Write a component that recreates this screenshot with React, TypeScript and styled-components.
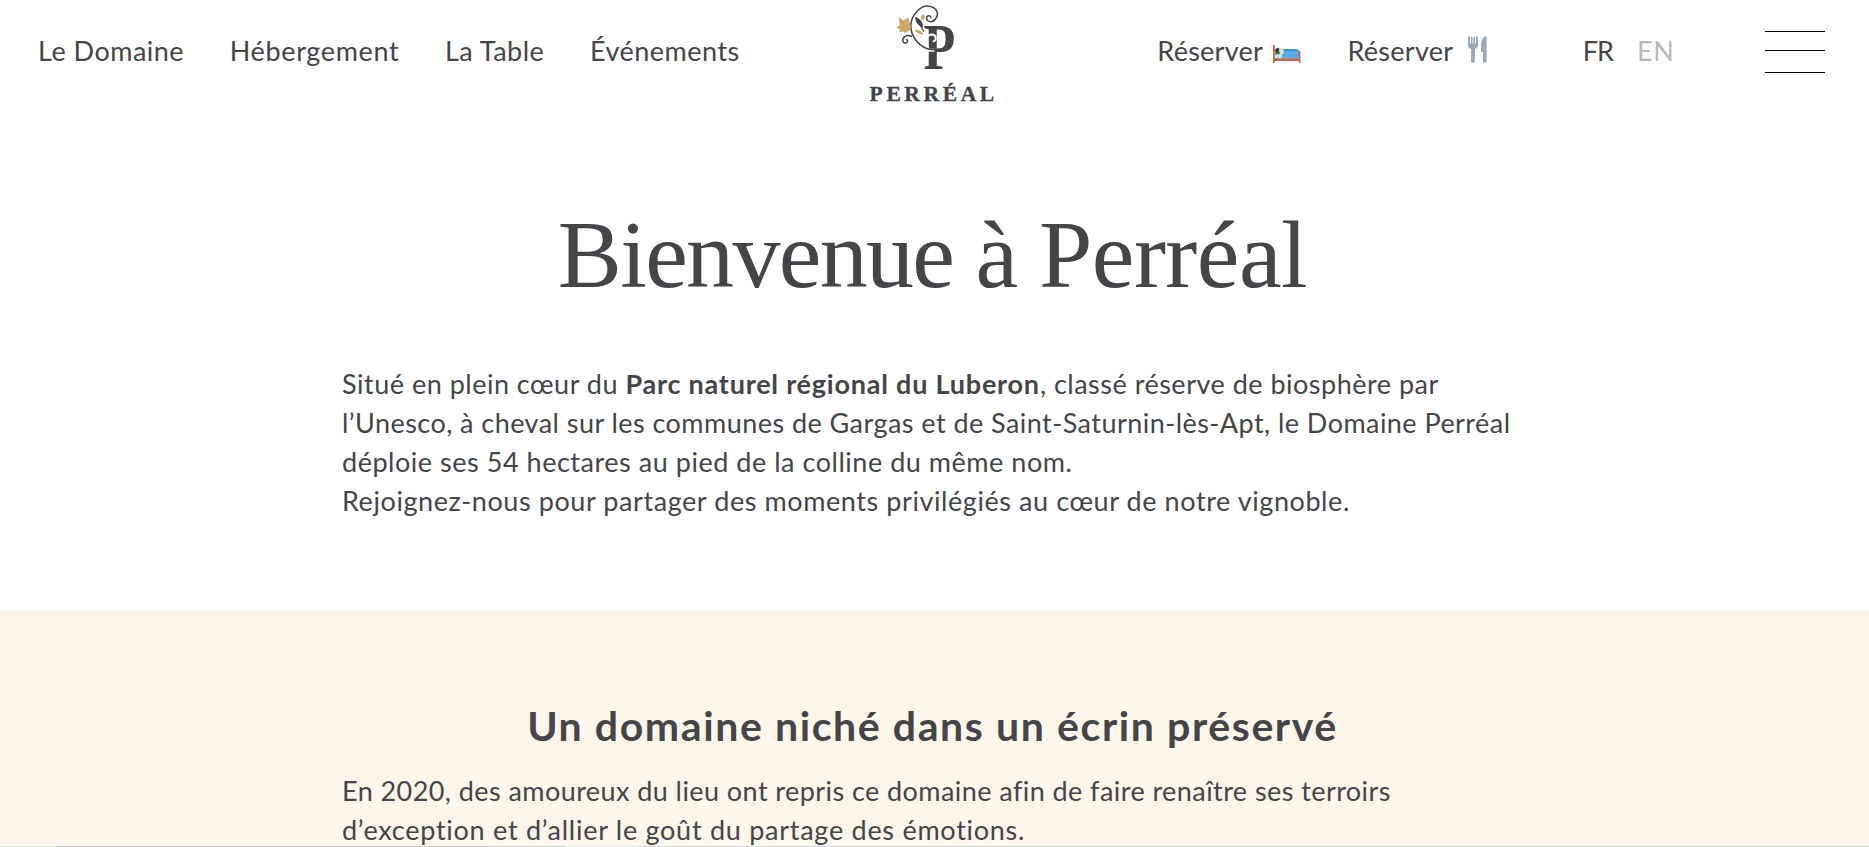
import React from "react";
import styled, { createGlobalStyle } from "styled-components";

const ink = "#444549";
const gold = "#cda766";

const GlobalStyle = createGlobalStyle`
  *, *::before, *::after { box-sizing: border-box; }
  html, body { margin: 0; background: #fff; overflow: hidden; }
`;

const Page = styled.div`
  position: relative;
  display: flex;
  flex-direction: column;
  height: 100vh;
  overflow: hidden;
  background: #fff;
  color: ${ink};
  font-family: Lato, "Open Sans", sans-serif;
  font-size: 27px;
  line-height: 39px;
`;

const Header = styled.header`
  display: grid;
  grid-template-columns: 1fr 140px 1fr;
  flex: none;
  height: 110px;
  padding: 0 44px 0 38px;
`;

const Nav = styled.nav`
  display: flex;
  align-items: flex-start;
  gap: 45.6px;
  padding-top: 31px;
`;

const NavLink = styled.a<{ $spacing: number }>`
  color: inherit;
  letter-spacing: ${(p) => p.$spacing}px;
  white-space: nowrap;
`;

const LogoLink = styled.a`
  display: block;
  width: 140px;
  height: 110px;
`;

const Actions = styled.div`
  display: flex;
  justify-content: flex-end;
  align-items: flex-start;
  padding-top: 31px;
`;

const BookLink = styled.a<{ $iconGap: number; $after: number }>`
  display: flex;
  gap: ${(p) => p.$iconGap}px;
  margin-right: ${(p) => p.$after}px;
  letter-spacing: 0.25px;
  color: inherit;
`;

const BedSvg = styled.svg`
  flex: none;
  width: 28px;
  height: 19px;
  margin-top: 14px;
`;

const CutlerySvg = styled.svg`
  flex: none;
  width: 19px;
  height: 28px;
  margin-top: 5px;
`;

const Languages = styled.div`
  display: flex;
  gap: 24px;
  margin-right: 90.6px;
`;

const Language = styled.a<{ $muted?: boolean }>`
  color: ${(p) => (p.$muted ? "#b9babb" : "inherit")};
  letter-spacing: ${(p) => (p.$muted ? 0.6 : -1)}px;
`;

const Burger = styled.button`
  display: flex;
  flex-direction: column;
  width: 60px;
  padding: 0;
  border: 0;
  background: none;
`;

const BurgerBar = styled.span<{ $gap: number }>`
  width: 100%;
  height: 1px;
  margin-top: ${(p) => p.$gap}px;
  background: #000;
`;

const Intro = styled.section`
  flex: none;
  height: 501px;
  padding-top: 90px;
`;

const Title = styled.h1`
  margin: 0 0 54px;
  padding-right: 4px;
  font: 400 96px/110px "Liberation Serif", serif;
  letter-spacing: -1.67px;
  text-align: center;
`;

const TitleName = styled.span`
  letter-spacing: -0.5px;
`;

const Text = styled.p`
  width: 1185px;
  margin: 0 auto;
`;

const Line = styled.span<{ $spacing: number }>`
  display: block;
  letter-spacing: ${(p) => p.$spacing}px;
  white-space: nowrap;
`;

const Strong = styled.strong`
  font-weight: 700;
  letter-spacing: 0.78px;
`;

const Story = styled.section`
  flex: 1;
  padding-top: 90px;
  background: #fdf6ea;
`;

const Subtitle = styled.h2`
  margin: 0 0 20px;
  padding-right: 4px;
  font-size: 41px;
  font-weight: 700;
  line-height: 50px;
  letter-spacing: 1.6px;
  text-align: center;
`;

const BottomEdge = styled.div`
  position: absolute;
  inset: auto 0 0;
  height: 1px;
  background: linear-gradient(
    90deg,
    #d5dade 56px,
    #c9c9c7 56px 488px,
    #d0d5de 488px 565px,
    #eeeeed 565px 638px,
    #d0d5de 638px
  );
`;

const Logo = () => (
  <LogoLink aria-label="Perréal">
    <svg width="140" height="110" viewBox="862 0 140 110">
      <text x="923.6" y="68.7" fontFamily="Liberation Serif, serif" fontWeight="700" fontSize="65" textLength="39.7" lengthAdjust="spacingAndGlyphs" fill={ink} transform="translate(923.6 0) scale(.8 1) translate(-923.6 0)">P</text>
      <path d="M916 43 C919.5 47.5 925 50.2 931.5 50.2 H934.5" fill="none" stroke="#fff" strokeWidth="3" />
      <path d="M928.5 48 C924.5 43 926 35 931.5 34.6 C937 34.6 937 41.8 932.8 41.3" fill="none" stroke="#fff" strokeWidth="2" />
      <g fill="none" stroke={ink} strokeWidth="1.5" strokeLinecap="round">
        <path d="M930.8 17.6 C930.8 14.5 926.3 15.3 926.6 18.7 C927.3 22.3 932 22.6 935 19.6 C939.5 15 937.5 7.2 929 6.2 C920 5.2 911.5 15 910.8 25 C910.4 36 919.5 48.6 931.5 49.4 H943" />
        <path d="M911.7 36.5 C906 33.8 901.7 38 903 41.5 C904.5 44.7 909 42.5 907 39.5" />
      </g>
      <path d="M915.4 16.8 C921.5 19.6 923.3 23.4 922.8 27.5 C917.6 25.8 914.8 21.5 915.4 16.8Z" fill={ink} />
      <path d="M920.3 25 L923.8 31.8" stroke={ink} strokeWidth="1.3" />
      <ellipse cx="922.8" cy="17.3" rx="1.9" ry="2.8" fill={gold} />
      <path d="M914.2 29.8 C918 29.1 922 31 923.6 34.4 C919.5 34.6 916.2 33 914.2 29.8Z" fill={gold} />
      <path d="M898.6 17.2 L903.6 20.6 L908.3 17.6 L909.3 21.7 L911.2 27 L909.5 30.6 L904.6 32.8 L903.3 31.4 L899.3 32.3 L900 29.6 L896.3 27.4 L899.8 25.3Z" fill={gold} />
      <text x="869.6" y="101.2" fontFamily="Liberation Serif, serif" fontWeight="700" fontSize="21.5" textLength="124.6" lengthAdjust="spacing" fill={ink} stroke={ink} strokeWidth="0.35">PERRÉAL</text>
    </svg>
  </LogoLink>
);

const BedIcon = () => (
  <BedSvg viewBox="0 0 28 19" aria-hidden="true">
    <path d="M1.8 7.5 H9 V14 H1.8Z" fill="#bfe4fb" />
    <path d="M2 5 C3 2.2 7 2.3 7.5 6 L6.5 8.5 H3Z" fill="#30383b" />
    <path d="M2 7.2 L8 8 L5.5 9.5 H2Z" fill="#5d8c3b" />
    <circle cx="8.2" cy="5.6" r="2.4" fill="#f5d4c0" />
    <path d="M10 4 L25 4.6 Q26 4.8 26 6 V13.5 H9 V9 Q11.5 8.5 10 4Z" fill="#55acee" />
    <path d="M10 4 L25 4.6 V6.2 L11 5.3Z" fill="#3b88c3" />
    <path d="M0 0 H1.8 V13.2 H25.6 V6 H27.4 V18 H25.8 V16 H1.8 V18 H0Z" fill="#c1694f" />
  </BedSvg>
);

const CutleryIcon = () => (
  <CutlerySvg viewBox="0 0 19 28" aria-hidden="true" fill="#99aab5">
    <path d="M0 1 Q1 -.4 2 1 V7.5 H3 V1 Q3.8 -.2 4.5 1 V7.5 H5.4 V1 Q6.2 -.2 7 1 V7.5 H8 V1 Q9 -.4 10 1 V9 Q10 12 6.9 13 V25.7 Q5 28 3.1 25.7 V13 Q0 12 0 9Z" />
    <path d="M18.6 1.5 V25.7 Q16.8 28 15 25.7 V16 H13 V9 Q13.3 3 16.5 .6 Q18.4 -.4 18.6 1.5Z" />
  </CutlerySvg>
);

const links = [
  { label: "Le Domaine", spacing: 0.5 },
  { label: "Hébergement", spacing: 0.65 },
  { label: "La Table", spacing: 0.5 },
  { label: "Événements", spacing: 0.5 },
];

export default function App() {
  return (
    <>
      <GlobalStyle />
      <Page>
        <Header>
          <Nav>
            {links.map((l) => (
              <NavLink key={l.label} $spacing={l.spacing}>{l.label}</NavLink>
            ))}
          </Nav>
          <Logo />
          <Actions>
            <BookLink $iconGap={10} $after={46.5}>Réserver<BedIcon /></BookLink>
            <BookLink $iconGap={14.5} $after={96}>Réserver<CutleryIcon /></BookLink>
            <Languages>
              <Language>FR</Language>
              <Language $muted>EN</Language>
            </Languages>
            <Burger aria-label="Menu">
              <BurgerBar $gap={0} />
              <BurgerBar $gap={18} />
              <BurgerBar $gap={21} />
            </Burger>
          </Actions>
        </Header>
        <Intro>
          <Title>Bienvenue à <TitleName>Perréal</TitleName></Title>
          <Text>
            <Line $spacing={0.5}>
              Situé en plein cœur du <Strong>Parc naturel régional du Luberon</Strong>, classé réserve de biosphère par
            </Line>
            <Line $spacing={0.45}>
              l’Unesco, à cheval sur les communes de Gargas et de Saint-Saturnin-lès-Apt, le Domaine Perréal
            </Line>
            <Line $spacing={0.53}>déploie ses 54 hectares au pied de la colline du même nom.</Line>
            <Line $spacing={0.58}>
              Rejoignez-nous pour partager des moments privilégiés au cœur de notre vignoble.
            </Line>
          </Text>
        </Intro>
        <Story>
          <Subtitle>Un domaine niché dans un écrin préservé</Subtitle>
          <Text>
            <Line $spacing={0.43}>
              En 2020, des amoureux du lieu ont repris ce domaine afin de faire renaître ses terroirs
            </Line>
            <Line $spacing={0.73}>d’exception et d’allier le goût du partage des émotions.</Line>
          </Text>
        </Story>
        <BottomEdge />
      </Page>
    </>
  );
}
